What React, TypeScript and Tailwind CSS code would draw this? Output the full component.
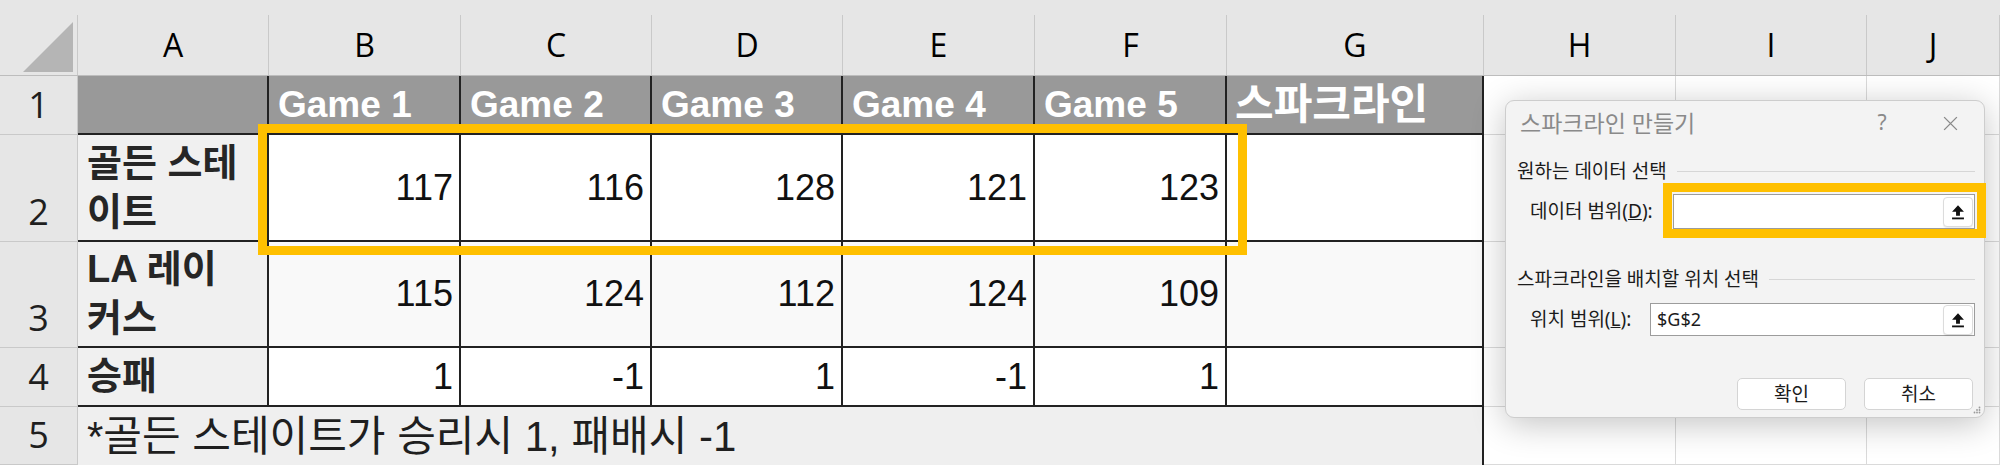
import React from 'react';

const CELL_FONT = { fontFamily: '"Liberation Sans", "Noto Sans CJK KR", sans-serif' };
const HEAD_FONT = { fontFamily: '"Open Sans", "Noto Sans", sans-serif' };
const UI_FONT = { fontFamily: '"Noto Sans", "Noto Sans CJK KR", sans-serif' };

const COLS = ['A', 'B', 'C', 'D', 'E', 'F', 'G', 'H', 'I', 'J'];

const DATA: { label: string[]; values: number[]; bg: string }[] = [
  { label: ['골든 스테', '이트'], values: [117, 116, 128, 121, 123], bg: 'bg-white' },
  { label: ['LA 레이', '커스'], values: [115, 124, 112, 124, 109], bg: 'bg-[#f9f9f9]' },
  { label: ['승패'], values: [1, -1, 1, -1, 1], bg: 'bg-white' },
];

function ColHeader({ name }: { name: string }) {
  return (
    <div className="bg-[#e6e6e6] border-b border-[#bdbdbd] pt-[15px]">
      <div className="h-full border-r border-[#c9c9c9] flex items-center justify-center text-[32px] text-black" style={HEAD_FONT}>
        {name}
      </div>
    </div>
  );
}

function RowHeader({ n }: { n: number }) {
  return (
    <div className="bg-[#e6e6e6] border-r border-b border-[#c9c9c9] flex items-end justify-center pb-[11px] text-[36px] leading-none text-[#1f1f1f]" style={HEAD_FONT}>
      {n}
    </div>
  );
}

function Blank() {
  return <div className="bg-white border-r border-b border-[#dadada]" />;
}

function UploadButton() {
  return (
    <div className="w-[30px] h-[30px] rounded-[4px] bg-white border border-[#dcdcdc] shadow-[0_1px_1px_rgba(0,0,0,0.08)] flex items-center justify-center">
      <svg width="16" height="16" viewBox="0 0 14 14">
        <path d="M7 1.2 L12.2 6.8 H8.7 V10.2 H5.3 V6.8 H1.8 Z" fill="#111" />
        <path d="M1.8 12.6 H12.2" stroke="#111" strokeWidth="1.6" />
      </svg>
    </div>
  );
}

function SparklineDialog() {
  return (
    <div className="absolute left-[1505px] top-[100px] w-[480px] h-[318px] rounded-[9px] border border-[#cdcdcd] bg-[#f3f3f3] shadow-[0_6px_34px_rgba(0,0,0,0.24)] flex flex-col" style={UI_FONT}>
      {/* Title bar */}
      <div className="h-[44px] flex items-center pl-[14px] pr-[19px]">
        <span className="flex-1 text-[23px] text-[#8a8a8a]">스파크라인 만들기</span>
        <span className="w-[30px] text-center text-[21px] text-[#8a8a8a]">?</span>
        <span className="w-[30px] ml-[38px] flex items-center justify-center">
          <svg width="17" height="17" viewBox="0 0 16 16">
            <path d="M2 2 L14 14 M14 2 L2 14" stroke="#8a8a8a" strokeWidth="1.3" />
          </svg>
        </span>
      </div>

      {/* Data range */}
      <div className="mt-[14px] h-[24px] flex items-center gap-[10px] pl-[11px] pr-[9px]">
        <span className="text-[19px] text-[#1b1b1b]">원하는 데이터 선택</span>
        <div className="flex-1 h-px bg-[#d6d6d6]" />
      </div>
      <div className="mt-[11px] h-[35px] flex items-center pl-[24px] pr-[9px]">
        <span className="text-[19px] text-[#1b1b1b]">데이터 범위(<u>D</u>):</span>
        <div className="ml-auto w-[302px] h-[35px] bg-white border border-[#9c9c9c] flex items-center justify-end pr-[1px]">
          <UploadButton />
        </div>
      </div>

      {/* Location range */}
      <div className="mt-[38px] h-[24px] flex items-center gap-[10px] pl-[11px] pr-[9px]">
        <span className="text-[19px] text-[#1b1b1b]">스파크라인을 배치할 위치 선택</span>
        <div className="flex-1 h-px bg-[#d6d6d6]" />
      </div>
      <div className="mt-[12px] h-[33px] flex items-center pl-[24px] pr-[9px]">
        <span className="text-[19px] text-[#1b1b1b]">위치 범위(<u>L</u>):</span>
        <div className="ml-auto w-[325px] h-[33px] bg-white border border-[#9c9c9c] flex items-center pl-[6px] pr-[1px]">
          <span className="flex-1 text-[18px] text-[#1b1b1b]">$G$2</span>
          <UploadButton />
        </div>
      </div>

      {/* Buttons */}
      <div className="mt-[42px] flex justify-end gap-[18px] pr-[11px]">
        {['확인', '취소'].map((t) => (
          <div key={t} className="w-[109px] h-[32px] rounded-[5px] bg-white border border-[#d4d4d4] flex items-center justify-center text-[19px] text-[#1b1b1b]">
            {t}
          </div>
        ))}
      </div>

      {/* resize grip */}
      <svg className="absolute right-[3px] bottom-[3px]" width="8" height="8" viewBox="0 0 8 8">
        <circle cx="6.5" cy="1.5" r="0.9" fill="#9a9a9a" />
        <circle cx="4" cy="4" r="0.9" fill="#9a9a9a" />
        <circle cx="6.5" cy="4" r="0.9" fill="#9a9a9a" />
        <circle cx="1.5" cy="6.5" r="0.9" fill="#9a9a9a" />
        <circle cx="4" cy="6.5" r="0.9" fill="#9a9a9a" />
        <circle cx="6.5" cy="6.5" r="0.9" fill="#9a9a9a" />
      </svg>
    </div>
  );
}

export default function App() {
  return (
    <div className="relative w-[2000px] h-[465px] overflow-hidden bg-white">
      <div className="grid grid-cols-[78px_191px_192px_191px_191px_192px_192px_257px_192px_191px_1fr] grid-rows-[76px_59px_107px_106px_59px_58px]">
        {/* corner */}
        <div className="bg-[#e6e6e6] border-b border-[#bdbdbd] pt-[15px]">
          <div className="h-full border-r border-[#c9c9c9] relative">
            <svg className="absolute left-[23px] top-[7px]" width="50" height="50" viewBox="0 0 50 50">
              <path d="M50 0 L50 50 L0 50 Z" fill="#b5b5b5" />
            </svg>
          </div>
        </div>
        {COLS.map((c) => (
          <ColHeader key={c} name={c} />
        ))}

        {/* row 1 */}
        <RowHeader n={1} />
        <div className="bg-[#999999] border-r-2 border-b-2 border-[#222222]" />
        {[1, 2, 3, 4, 5].map((g) => (
          <div key={g} className="bg-[#999999] border-r-2 border-b-2 border-[#222222] flex items-center pl-[9px] text-[37px] font-bold text-white" style={CELL_FONT}>
            Game {g}
          </div>
        ))}
        <div className="bg-[#999999] border-r-2 border-b-2 border-[#222222] flex items-center pl-[8px] text-[42px] font-bold text-white whitespace-nowrap" style={CELL_FONT}>
          스파크라인
        </div>
        <Blank />
        <Blank />
        <Blank />

        {/* rows 2-4 */}
        {DATA.map((row, i) => (
          <React.Fragment key={i}>
            <RowHeader n={i + 2} />
            <div className="bg-[#f0f0f0] border-r-2 border-b-2 border-[#222222] flex flex-col justify-center pl-[9px] text-[38px] leading-[49px] font-bold text-[#262626]" style={CELL_FONT}>
              {row.label.map((l) => (
                <span key={l} className="whitespace-nowrap">{l}</span>
              ))}
            </div>
            {row.values.map((v, j) => (
              <div key={j} className={`${row.bg} border-r-2 border-b-2 border-[#222222] flex items-center justify-end pr-[6px] text-[36px] text-[#111111]`} style={CELL_FONT}>
                {v}
              </div>
            ))}
            <div className={`${row.bg} border-r-2 border-b-2 border-[#222222]`} />
            <Blank />
            <Blank />
            <Blank />
          </React.Fragment>
        ))}

        {/* row 5 */}
        <RowHeader n={5} />
        <div className="col-span-7 bg-[#efefef] border-r-2 border-[#222222] flex items-center pl-[9px] text-[42px] text-[#1f1f1f] whitespace-nowrap" style={CELL_FONT}>
          *골든 스테이트가 승리시 1, 패배시 -1
        </div>
        <Blank />
        <Blank />
        <Blank />
      </div>

      {/* selection highlight over B2:F2 */}
      <div className="absolute left-[258px] top-[124px] w-[989px] h-[131px] border-[9px] border-[#ffc000]" />

      <SparklineDialog />

      {/* highlight on data range input */}
      <div className="absolute left-[1663px] top-[183px] w-[323px] h-[55px] border-[9px] border-[#ffc000]" />
    </div>
  );
}
